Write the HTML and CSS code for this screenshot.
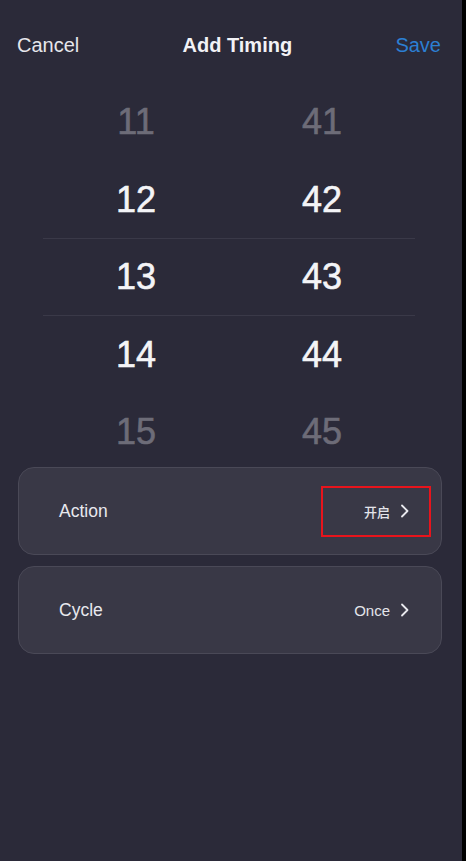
FILE: index.html
```html
<!DOCTYPE html>
<html lang="en">

<head>
  <meta charset="UTF-8">
  <title>Add Timing</title>
  <link rel="stylesheet" href="styles.css">
</head>

<body>
  <div class="screen">
    <header class="topbar">
      <span class="cancel">Cancel</span>
      <span class="title">Add Timing</span>
      <span class="save">Save</span>
    </header>

    <div class="picker">
      <div class="row faded"><span>11</span><span>41</span></div>
      <div class="row"><span>12</span><span>42</span></div>
      <div class="row current"><span>13</span><span>43</span></div>
      <div class="row"><span>14</span><span>44</span></div>
      <div class="row faded"><span>15</span><span>45</span></div>
    </div>

    <div class="card">
      <span class="label">Action</span>
      <span class="value marked">
        <span class="cjk">开启</span>
        <svg class="chevron" width="10" height="14" viewBox="0 0 10 14">
          <path d="M2 1.5 L7.5 7 L2 12.5" fill="none" stroke="#e9e9ee" stroke-width="1.8" stroke-linecap="round" stroke-linejoin="round" />
        </svg>
      </span>
    </div>

    <div class="card">
      <span class="label">Cycle</span>
      <span class="value">
        <span>Once</span>
        <svg class="chevron" width="10" height="14" viewBox="0 0 10 14">
          <path d="M2 1.5 L7.5 7 L2 12.5" fill="none" stroke="#e9e9ee" stroke-width="1.8" stroke-linecap="round" stroke-linejoin="round" />
        </svg>
      </span>
    </div>
  </div>
</body>

</html>
```

FILE: styles.css
```css
body {
  margin: 0;
  background: #000;
  font-family: "Liberation Sans", Arial, "Noto Sans CJK SC", sans-serif;
  color: #ececf1;
}

.screen {
  width: 462px;
  height: 861px;
  background: #2b2a39;
  overflow: hidden;
}

.topbar {
  display: flex;
  justify-content: space-between;
  align-items: center;
  height: 30px;
  padding: 30px 21px 23px 17px;
  font-size: 20px;
}

.cancel {
  color: #e6e6ec;
}

.title {
  font-weight: bold;
  color: #f2f2f6;
}

.save {
  color: #2c7fd3;
}

.picker {
  height: 384px;
  overflow: hidden;
}

.row {
  display: grid;
  grid-template-columns: 186px 186px;
  margin: 0 0 0 43px;
  width: 372px;
  height: 77.5px;
  line-height: 77.5px;
  font-size: 36px;
  text-align: center;
  color: #f4f4f7;
  -webkit-text-stroke: 0.6px currentColor;
  box-sizing: border-box;
}

.row.faded {
  color: #6d6c78;
}

.row.current {
  border-top: 1px solid #3a3948;
  border-bottom: 1px solid #3a3948;
  line-height: 75.5px;
}

.card {
  display: flex;
  justify-content: space-between;
  align-items: center;
  height: 88px;
  margin: 0 20px 11px 18px;
  padding: 0 10px 0 40px;
  background: #393846;
  border: 1px solid #4a4957;
  border-radius: 16px;
  box-sizing: border-box;
}

.label {
  font-size: 17.5px;
  color: #e8e8ee;
}

.value {
  display: flex;
  justify-content: flex-end;
  align-items: center;
  gap: 10px;
  width: 110px;
  height: 51px;
  padding-right: 19px;
  border: 2px solid transparent;
  box-sizing: border-box;
  font-size: 15px;
  color: #e4e4ea;
}

.value.marked {
  border-color: #e8141c;
}

.cjk {
  font-family: "Noto Sans CJK SC", sans-serif;
  font-size: 13px;
  font-weight: 500;
}

.chevron {
  display: block;
}
```
